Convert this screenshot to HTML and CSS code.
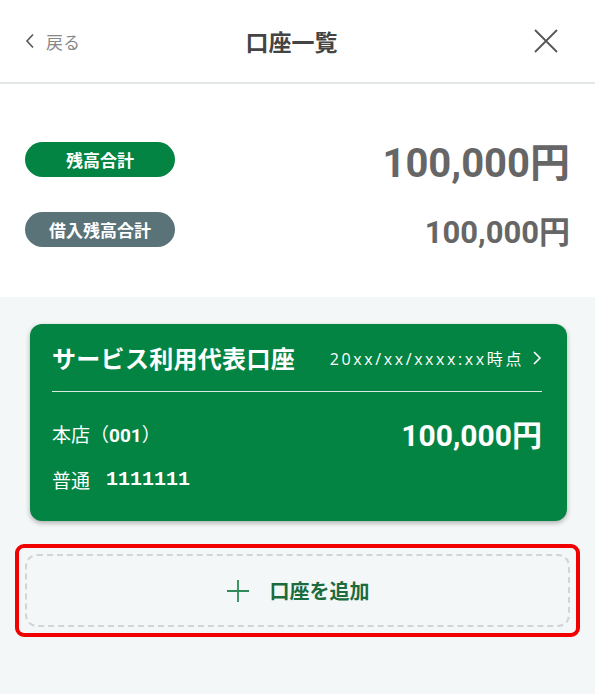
FILE: index.html
```html
<!DOCTYPE html>
<html lang="ja">
<head>
  <meta charset="UTF-8">
  <meta name="viewport" content="width=device-width, initial-scale=1.0">
  <title>口座一覧</title>
  <link rel="stylesheet" href="styles.css">
</head>
<body>
  <header class="header">
    <a class="back" href="#">
      <svg width="10" height="16" viewBox="0 0 10 16"><path d="M8 1.5 L2 8 L8 14.5" fill="none" stroke="#555" stroke-width="1.6"/></svg>
      <span>戻る</span>
    </a>
    <h1 class="title">口座一覧</h1>
    <button class="close" aria-label="閉じる">
      <svg width="24" height="24" viewBox="0 0 24 24"><path d="M1 1 L23 23 M23 1 L1 23" stroke="#555" stroke-width="1.8"/></svg>
    </button>
  </header>

  <section class="summary">
    <div class="summary-row">
      <span class="pill pill-green">残高合計</span>
      <span class="amount amount-lg">100,000円</span>
    </div>
    <div class="summary-row">
      <span class="pill pill-gray">借入残高合計</span>
      <span class="amount amount-md">100,000円</span>
    </div>
  </section>

  <section class="accounts">
    <div class="card">
      <div class="card-head">
        <span class="card-title">サービス利用代表口座</span>
        <span class="card-date">20xx/xx/xxxx:xx時点
          <svg width="10" height="16" viewBox="0 0 10 16"><path d="M2 2 L8 8 L2 14" fill="none" stroke="#fff" stroke-width="1.6"/></svg>
        </span>
      </div>
      <div class="card-body">
        <div class="card-line">
          <span class="branch">本店（<span class="branch-no">001</span>）</span>
          <span class="card-amount">100,000円</span>
        </div>
        <div class="card-line">
          <span class="acct">普通<span class="acct-no">1111111</span></span>
        </div>
      </div>
    </div>

    <div class="add-outline">
      <button class="add">
        <svg width="24" height="24" viewBox="0 0 24 24"><path d="M12 1 V23 M1 12 H23" stroke="#2e8b57" stroke-width="1.8"/></svg>
        <span>口座を追加</span>
      </button>
    </div>
  </section>
</body>
</html>
```

FILE: styles.css
```css
* {
  box-sizing: border-box;
}

body {
  margin: 0;
  font-family: "Noto Sans CJK JP", "Noto Sans", sans-serif;
  background: #f4f7f8;
  color: #333;
  width: 595px;
  height: 694px;
  overflow: hidden;
}

.header {
  height: 84px;
  background: #fff;
  border-bottom: 2px solid #e2e6e7;
  display: grid;
  grid-template-columns: 1fr auto 1fr;
  align-items: center;
  padding: 0 37px 0 25px;
}

.back {
  display: flex;
  align-items: center;
  gap: 11px;
  color: #888;
  text-decoration: none;
  font-size: 17px;
}

.title {
  margin: 0;
  font-size: 23px;
  font-weight: 700;
  color: #444;
}

.close {
  justify-self: end;
  background: none;
  border: none;
  padding: 0;
  display: flex;
}

.summary {
  background: #fff;
  padding: 58px 25px 50px;
  display: flex;
  flex-direction: column;
  gap: 35px;
}

.summary-row {
  display: flex;
  align-items: center;
  justify-content: space-between;
  height: 35px;
}

.pill {
  width: 150px;
  height: 35px;
  border-radius: 18px;
  color: #fff;
  font-weight: 700;
  font-size: 17px;
  display: flex;
  align-items: center;
  justify-content: center;
}

.pill-green {
  background: #048443;
}

.pill-gray {
  background: #5a7378;
}

.amount {
  font-family: Roboto, "Noto Sans CJK JP", sans-serif;
  font-weight: 700;
  color: #666;
}

.amount-lg {
  font-size: 40px;
}

.amount-md {
  font-size: 31px;
}

.accounts {
  padding: 27px 15px 0;
}

.card {
  margin: 0 13px 0 15px;
  background: #048443;
  border-radius: 12px;
  box-shadow: 0 2px 5px rgba(0, 0, 0, 0.3);
  color: #fff;
  padding: 0 25px 0 22px;
  height: 197px;
}

.card-head {
  display: flex;
  justify-content: space-between;
  align-items: center;
  height: 68px;
  border-bottom: 1.5px solid #d8eadf;
}

.card-title {
  font-size: 24px;
  font-weight: 700;
  letter-spacing: 0.3px;
}

.card-date {
  font-family: "Open Sans", "Noto Sans CJK JP", sans-serif;
  font-size: 16px;
  letter-spacing: 2.6px;
  display: flex;
  align-items: center;
  gap: 8px;
}

.card-body {
  padding-top: 21px;
}

.card-line {
  display: flex;
  justify-content: space-between;
  align-items: center;
  height: 40px;
  margin-bottom: 6px;
}

.branch {
  font-size: 19px;
}

.branch-no {
  font-family: Roboto, sans-serif;
  font-weight: 700;
}

.card-amount {
  font-family: Roboto, "Noto Sans CJK JP", sans-serif;
  font-weight: 700;
  font-size: 30px;
}

.acct {
  font-size: 19px;
  display: flex;
  align-items: center;
  gap: 16px;
}

.acct-no {
  font-family: "Liberation Mono", monospace;
  font-weight: 700;
  font-size: 20px;
}

.add-outline {
  margin-top: 23px;
  border: 4px solid #f20000;
  border-radius: 9px;
  padding: 6px 6px;
}

.add {
  width: 100%;
  height: 73px;
  border: 2px dashed #d2d5d6;
  border-radius: 12px;
  background: #f4f7f8;
  display: flex;
  align-items: center;
  justify-content: center;
  gap: 20px;
  font-family: "Noto Sans CJK JP", sans-serif;
  font-size: 20px;
  font-weight: 700;
  color: #1b6b3f;
}
```
